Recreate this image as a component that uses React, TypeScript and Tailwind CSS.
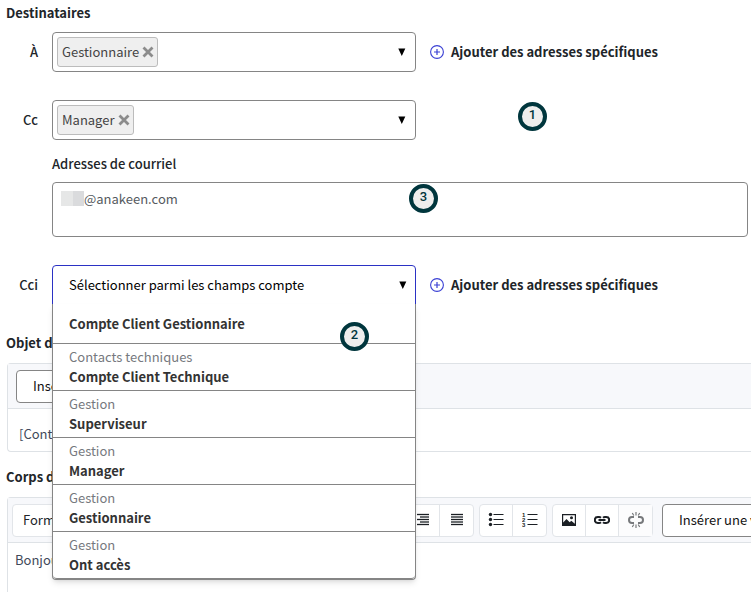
import { useState } from 'react';
import type { ReactNode } from 'react';

const accountFields = [
    { group: '', name: 'Compte Client Gestionnaire' },
    { group: 'Contacts techniques', name: 'Compte Client Technique' },
    { group: 'Gestion', name: 'Superviseur' },
    { group: 'Gestion', name: 'Manager' },
    { group: 'Gestion', name: 'Gestionnaire' },
    { group: 'Gestion', name: 'Ont accès' },
];

const Icon = ({ children }: { children: ReactNode }) => (
    <svg width="16" height="16" viewBox="0 0 16 16" fill="none" stroke="currentColor" aria-hidden="true">
        {children}
    </svg>
);

const RemoveIcon = () => (
    <svg width="12" height="12" viewBox="0 0 12 12" stroke="#8c8c8c" strokeWidth="2.8" aria-hidden="true">
        <path d="M1.5 1.5 10.5 10.5M10.5 1.5 1.5 10.5" />
    </svg>
);

const Caret = () => (
    <svg width="8" height="8" viewBox="0 0 8 8" className="pointer-events-none absolute right-[9px] top-1/2 -translate-y-1/2" aria-hidden="true">
        <path d="M0.3 0.5h7L3.8 8z" fill="#000" />
    </svg>
);

const Marker = ({ value, className }: { value: number; className: string }) => (
    <span className={`absolute z-20 flex size-[29px] justify-center rounded-full border-4 border-[#00363d] bg-[#eeeeed] font-[Roboto] text-[13px] font-medium leading-[18px] text-[#00363d] ${className}`}>
        {value}
    </span>
);

const AddAddresses = () => (
    <button type="button" className="ml-[14px] flex items-center gap-[7px] font-bold">
        <svg width="14" height="14" viewBox="0 0 14 14" fill="none" stroke="#3a40d4" aria-hidden="true">
            <circle cx="7" cy="7" r="6.4" strokeWidth="1.1" />
            <path d="M7 4v6M4 7h6" strokeWidth="1.2" />
        </svg>
        Ajouter des adresses spécifiques
    </button>
);

const FieldLabel = ({ id, children }: { id: string; children: ReactNode }) => (
    <label htmlFor={id} className="w-[52px] shrink-0 pr-[14px] text-right font-medium">{children}</label>
);

const TagSelect = ({ id, initial }: { id: string; initial: string[] }) => {
    const [tags, setTags] = useState(initial);

    return (
        <div className="relative flex h-10 w-[364px] items-center gap-1 rounded border border-[#858585] bg-white px-1">
            {tags.map((tag) => (
                <span key={tag} className="flex h-[30px] items-center gap-[3px] rounded-[3px] border border-[#bcbcbc] bg-[#efefef] pl-1 pr-[3px] text-[#444]">
                    {tag}
                    <button type="button" aria-label={`Supprimer ${tag}`} onClick={() => setTags(tags.filter((t) => t !== tag))}>
                        <RemoveIcon />
                    </button>
                </span>
            ))}
            <select
                id={id}
                value=""
                onChange={(e) => setTags([...tags, e.target.value])}
                className="h-full min-w-0 flex-1 appearance-none bg-transparent outline-none"
            >
                <option value=""></option>
                {accountFields.filter((f) => !tags.includes(f.name)).map((f) => (
                    <option key={f.name} value={f.name}>{f.name}</option>
                ))}
            </select>
            <Caret />
        </div>
    );
};

const AccountSelect = ({ id }: { id: string }) => {
    const [value, setValue] = useState('');

    return (
        <div className="relative h-10 w-[364px]">
            <select
                id={id}
                value={value}
                onChange={(e) => setValue(e.target.value)}
                className="h-10 w-full appearance-none rounded-t border border-[#2b32c4] bg-white px-4 text-black outline-none"
            >
                <option value="">Sélectionner parmi les champs compte</option>
                {accountFields.map((f) => (
                    <option key={f.name} value={f.name}>{f.name}</option>
                ))}
            </select>
            <Caret />
            <ul role="listbox" className="absolute inset-x-0 top-[39px] z-10 rounded-b border-x border-b border-[#858585] bg-white shadow-md">
                {accountFields.map((f) => (
                    <li
                        key={f.name}
                        role="option"
                        aria-selected={f.name === value}
                        onClick={() => setValue(f.name)}
                        className={`flex cursor-pointer flex-col justify-center border-b border-[#858585] px-4 leading-5 last:rounded-b ${f.group ? 'h-[47px]' : 'h-10'}`}
                    >
                        {f.group && <span className="text-[#76797e]">{f.group}</span>}
                        <span className="font-bold text-[#333]">{f.name}</span>
                    </li>
                ))}
            </ul>
            <Marker value={2} className="left-[288px] top-[57px]" />
        </div>
    );
};

const ToolGroup = ({ children }: { children: ReactNode }) => (
    <div className="flex h-[33px] shrink-0 divide-x divide-[#e2e5e9] rounded border border-[#e2e5e9] bg-white">{children}</div>
);

const Tool = ({ label, disabled = false, children }: { label: string; disabled?: boolean; children: ReactNode }) => (
    <button type="button" aria-label={label} disabled={disabled} className="flex w-[33px] items-center justify-center text-[#1b1f24] disabled:bg-[#fcfcfd] disabled:text-[#77797c]">
        {children}
    </button>
);

const AlignIcon = ({ starts }: { starts: number[] }) => (
    <Icon>
        {starts.map((x, i) => (
            <path key={i} d={`M${x} ${2.5 + i * 2.5}H14`} strokeWidth="1.3" />
        ))}
    </Icon>
);

const InsertButton = ({ className }: { className: string }) => (
    <button type="button" className={`h-[33px] shrink-0 rounded border border-[#858585] bg-white px-4 text-[#111] ${className}`}>
        Insérer une valeur
    </button>
);

const BodyToolbar = () => (
    <div className="flex h-[45px] items-center gap-[5px] overflow-hidden border-b border-[#dee2e6] bg-[#f7f8fb] pl-1">
        <select aria-label="Format" className="h-[33px] w-[217px] shrink-0 appearance-none rounded border border-[#e2e5e9] bg-white px-[10px]">
            <option>Format</option>
        </select>
        <ToolGroup>
            <Tool label="Gras"><b>B</b></Tool>
            <Tool label="Italique"><i>I</i></Tool>
            <Tool label="Souligné"><u>U</u></Tool>
        </ToolGroup>
        <ToolGroup>
            <Tool label="Aligner à gauche"><AlignIcon starts={[2, 2, 2, 2, 2]} /></Tool>
            <Tool label="Centrer"><AlignIcon starts={[2, 4, 2, 4, 2]} /></Tool>
            <Tool label="Aligner à droite"><AlignIcon starts={[2, 5, 2, 5, 2]} /></Tool>
            <Tool label="Justifier"><AlignIcon starts={[2, 2, 2, 2, 2]} /></Tool>
        </ToolGroup>
        <ToolGroup>
            <Tool label="Liste à puces">
                <Icon>
                    <path d="M5.5 2.5h10M5.500 7.500h10M5.500 12.500h10" strokeWidth="1.2" />
                    <g fill="currentColor" stroke="none">
                        <circle cx="2.500" cy="2.500" r="1.7" />
                        <circle cx="2.500" cy="7.500" r="1.7" />
                        <circle cx="2.500" cy="12.500" r="1.7" />
                    </g>
                </Icon>
            </Tool>
            <Tool label="Liste numérotée">
                <Icon>
                    <path d="M5.500 2.500h10M5.500 7.500h10M5.500 12.500h10" strokeWidth="1.2" />
                    <g fill="currentColor" stroke="none" fontSize="6" fontWeight="700" fontFamily="Liberation Sans">
                        <text x="0" y="5">1</text>
                        <text x="0" y="10">2</text>
                        <text x="0" y="15">3</text>
                    </g>
                </Icon>
            </Tool>
        </ToolGroup>
        <ToolGroup>
            <Tool label="Insérer une image">
                <Icon>
                    <path fill="currentColor" stroke="none" fillRule="evenodd" d="M1 2h14v12H1zM2.200 3.200v7.300L5.500 7l3.200 3.200 1.600-1.400 3.500 3V3.200zM10.500 4.300a1.500 1.500 0 1 1 0 3 1.500 1.500 0 0 1 0-3z" />
                </Icon>
            </Tool>
            <Tool label="Insérer un lien">
                <Icon>
                    <path d="M7 10.200A3 3 0 0 1 5 11H3.800a3 3 0 0 1 0-6H5A3 3 0 0 1 7 5.800M9 5.800A3 3 0 0 1 11 5h1.200a3 3 0 0 1 0 6H11A3 3 0 0 1 9 10.200M4.500 8h7" strokeWidth="2" />
                </Icon>
            </Tool>
            <Tool label="Supprimer le lien" disabled>
                <Icon>
                    <path d="M6 11H4a3 3 0 0 1 0-6h2M10 5h2a3 3 0 0 1 0 6h-2" strokeWidth="2" />
                    <path d="M8 0v3.500M8 12.500V16M4.300 1l1.500 2.500M11.700 1l-1.500 2.500M4.300 15l1.500-2.500M11.700 15l-1.500-2.500" strokeWidth="1.2" />
                </Icon>
            </Tool>
        </ToolGroup>
        <InsertButton className="ml-1" />
    </div>
);

const App = () => (
    <main className="flex min-h-screen flex-col bg-white font-['Noto_Sans_CJK_SC','Source_Sans_Pro',sans-serif] text-[13px] leading-5 text-[#212529]">
        <h2 className="pl-[6px] pt-[3px] font-bold">Destinataires</h2>

        <div className="mt-[9px] flex items-center">
            <FieldLabel id="to">À</FieldLabel>
            <TagSelect id="to" initial={['Gestionnaire']} />
            <AddAddresses />
        </div>

        <div className="relative mt-7 flex items-center">
            <FieldLabel id="cc">Cc</FieldLabel>
            <TagSelect id="cc" initial={['Manager']} />
            <Marker value={1} className="left-[518px] top-[2px]" />
        </div>

        <div className="relative mt-[14px] flex flex-col gap-2 pl-[52px] pr-[3px]">
            <label htmlFor="emails" className="font-medium">Adresses de courriel</label>
            <textarea
                id="emails"
                defaultValue="@anakeen.com"
                className="block h-[55px] w-full resize-none rounded border border-[#858585] py-[6px] pl-[31px] pr-2 text-[#555a60] outline-none"
            />
            <span className="absolute left-[61px] top-[37px] h-[15px] w-[23px] bg-gradient-to-r from-[#e6e7e7] from-50% to-[#dadbdd] to-50%" />
            <Marker value={3} className="left-[409px] top-[30px]" />
        </div>

        <div className="mt-7 flex items-center">
            <FieldLabel id="bcc">Cci</FieldLabel>
            <AccountSelect id="bcc" />
            <AddAddresses />
        </div>

        <label htmlFor="subject" className="mt-7 pl-[6px] font-bold">Objet du courriel</label>
        <div className="ml-[7px] mt-[10px] rounded-l border-y border-l border-[#dee2e6]">
            <div className="flex h-[45px] items-center border-b border-[#dee2e6] bg-[#f7f8fb]">
                <InsertButton className="ml-2" />
            </div>
            <input id="subject" defaultValue="[Contrat]" className="block h-[42px] w-full px-[11px] pt-[6px] text-[#3f4a5a] outline-none" />
        </div>

        <label htmlFor="body" className="mt-[15px] pl-[6px] font-bold">Corps du courriel</label>
        <div className="ml-[7px] mt-[10px] flex flex-1 flex-col rounded-tl border-l border-t border-[#dee2e6]">
            <BodyToolbar />
            <textarea id="body" rows={1} defaultValue="Bonjour," className="block w-full flex-1 resize-none px-[7px] pt-[7px] text-[#3f4a5a] outline-none" />
        </div>
    </main>
);

export default App;
